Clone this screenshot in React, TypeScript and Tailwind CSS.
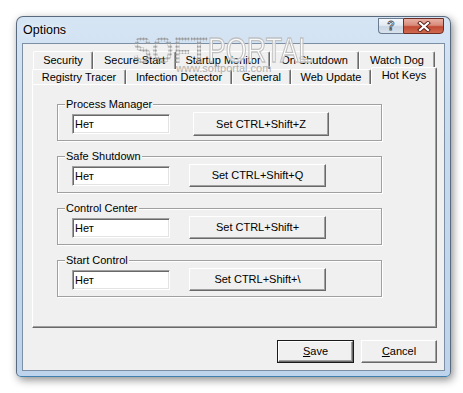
import React from "react";

const row1: [string, number][] = [
  ["Security", 60],
  ["Secure Start", 83],
  ["Startup Monitor", 94],
  ["On Shutdown", 89],
  ["Watch Dog", 76],
];

const row2: [string, number, boolean][] = [
  ["Registry Tracer", 94, false],
  ["Infection Detector", 106, false],
  ["General", 59, false],
  ["Web Update", 80, false],
  ["Hot Keys", 66, true],
];

const groups = [
  { label: "Process Manager", btn: "Set CTRL+Shift+Z", first: true },
  { label: "Safe Shutdown", btn: "Set CTRL+Shift+Q", first: false },
  { label: "Control Center", btn: "Set CTRL+Shift+", first: false },
  { label: "Start Control", btn: "Set CTRL+Shift+\\", first: false },
];

function Tab({ label, width, selected }: { label: string; width: number; selected?: boolean }) {
  return (
    <div
      style={{ width }}
      className={
        selected
          ? "relative z-10 -mt-[2px] h-[18px] shrink-0 flex items-center justify-center rounded-t-[2px] border-l border-t border-r border-l-white border-t-white border-r-[#696969] bg-[#f0f0f0] shadow-[inset_-1px_0_0_#a0a0a0] pb-[2px]"
          : "h-full shrink-0 flex items-center justify-center rounded-t-[2px] border-l border-t border-r border-l-white border-t-white border-r-[#696969] bg-[#f0f0f0] shadow-[inset_-1px_0_0_#a0a0a0]"
      }
    >
      <span className="text-[11px] leading-[13px] text-black whitespace-nowrap">{label}</span>
    </div>
  );
}

function Group({ label, btn, first }: { label: string; btn: string; first: boolean }) {
  return (
    <div className="relative w-[325px] h-[37px] shrink-0 flex items-start pl-[14px] border border-[#a0a0a0] shadow-[inset_1px_1px_0_#fff,1px_1px_0_#fff]">
      <span className="absolute left-[7px] -top-[7px] px-[1px] bg-[#f0f0f0] text-[11px] leading-[13px] text-black whitespace-nowrap">
        {label}
      </span>
      <div className="mt-[9px] w-[98px] h-[20px] shrink-0 flex items-center pl-[1px] bg-white border border-t-[#a0a0a0] border-l-[#a0a0a0] border-r-white border-b-white shadow-[inset_1px_1px_0_#696969,inset_-1px_-1px_0_#e3e3e3]">
        <span className="pl-[1px] text-[11px] leading-[13px] text-black">Нет</span>
      </div>
      <div
        className={
          first
            ? "ml-[23px] mt-[7px] w-[136px] h-[24px] shrink-0 flex items-center justify-center bg-[#f0f0f0] border border-t-white border-l-white border-r-[#696969] border-b-[#696969] shadow-[inset_-1px_-1px_0_#a0a0a0]"
            : "ml-[19px] mt-[7px] w-[137px] h-[23px] shrink-0 flex items-center justify-center bg-[#f0f0f0] border border-t-white border-l-white border-r-[#696969] border-b-[#696969] shadow-[inset_-1px_-1px_0_#a0a0a0]"
        }
      >
        <span className="text-[11px] leading-[13px] text-black whitespace-nowrap">{btn}</span>
      </div>
    </div>
  );
}

export default function App() {
  return (
    <div className="relative w-[463px] h-[393px] overflow-hidden bg-white pt-[16px] pl-[16px] font-['Liberation_Sans',Arial,sans-serif]">
      <div className="w-[435px] h-[361px] flex flex-col rounded-t-[7px] rounded-b-[5px] border border-[#5a6a7e] border-b-[#3f7fae] bg-[linear-gradient(180deg,#d6e5f4_0%,#c6dbef_35%,#bdd4ec_100%)] shadow-[2px_3px_9px_rgba(0,0,0,0.45)]">
        {/* title bar */}
        <div className="h-[26px] shrink-0 flex items-start justify-between pl-[6px] pr-[6px]">
          <span className="mt-[5px] text-[12.5px] leading-[16px] text-black [text-shadow:0_0_6px_#fff]">Options</span>
          <div className="flex mt-[1px]">
            <div className="w-[25px] h-[16px] flex items-center justify-center rounded-bl-[4px] border border-[#6b7c90] border-r-0 bg-[linear-gradient(180deg,#f4f7fb_0%,#e3eaf2_45%,#c9d5e2_55%,#d9e3ee_100%)]">
              <span className="text-[12px] leading-[12px] font-bold text-white [-webkit-text-stroke:0.8px_#4a4a4a]">?</span>
            </div>
            <div className="w-[41px] h-[16px] flex items-center justify-center rounded-br-[4px] border border-[#6e2d24] bg-[linear-gradient(180deg,#e9b0a3_0%,#d88a79_45%,#c24a33_55%,#d06a50_100%)]">
              <svg width="14" height="11" viewBox="0 0 14 11">
                <path d="M3 2 L11 9 M11 2 L3 9" stroke="#5a1f18" strokeWidth="4" strokeLinecap="square" />
                <path d="M3 2 L11 9 M11 2 L3 9" stroke="#ffffff" strokeWidth="2.2" strokeLinecap="square" />
              </svg>
            </div>
          </div>
        </div>

        {/* client area */}
        <div className="mx-[5px] h-[328px] shrink-0 flex flex-col border border-[#7d8fa5] bg-[#f0f0f0]">
          <div className="ml-[9px] mt-[7px] w-[405px] flex flex-col">
            <div className="flex h-[18px] pl-[1px]">
              {row1.map(([l, w]) => (
                <Tab key={l} label={l} width={w} />
              ))}
            </div>
            <div className="flex items-start h-[15px]">
              {row2.map(([l, w, s]) => (
                <Tab key={l} label={l} width={w} selected={s} />
              ))}
            </div>
            <div className="h-[244px] flex flex-col gap-[15px] pl-[24px] pt-[19px] bg-[#f0f0f0] border border-t-white border-l-white border-r-[#696969] border-b-[#696969] shadow-[inset_-1px_-1px_0_#a0a0a0]">
              {groups.map((g) => (
                <Group key={g.label} {...g} />
              ))}
            </div>
          </div>

          <div className="ml-[9px] mt-[12px] w-[405px] flex justify-end gap-[7px]">
            <div className="w-[77px] h-[23px] border border-[#1a1a1a]">
              <div className="w-full h-full flex items-center justify-center bg-[#f0f0f0] border border-t-white border-l-white border-r-[#696969] border-b-[#696969] shadow-[inset_-1px_-1px_0_#a0a0a0]">
                <span className="text-[11px] leading-[13px] text-black">
                  <span className="underline">S</span>ave
                </span>
              </div>
            </div>
            <div className="w-[76px] h-[23px] flex items-center justify-center bg-[#f0f0f0] border border-t-white border-l-white border-r-[#696969] border-b-[#696969] shadow-[inset_-1px_-1px_0_#a0a0a0]">
              <span className="text-[11px] leading-[13px] text-black">
                <span className="underline">C</span>ancel
              </span>
            </div>
          </div>
        </div>
      </div>

      {/* watermark overlay */}
      <div className="absolute left-[133px] top-[33px] flex items-start pointer-events-none">
        <span className="text-[28px] leading-[27px] font-bold origin-top scale-y-[1.3] text-transparent bg-clip-text bg-[radial-gradient(circle,#9a9a9a_1px,transparent_1.2px)] bg-[length:3px_3px] tracking-[0px]">
          SOFT
        </span>
        <span className="text-[27px] leading-[27px] origin-top scale-y-[1.3] text-white/80 [-webkit-text-stroke:1px_#c0c0c0]">
          PORTAL
        </span>
      </div>
      <span className="absolute left-[176px] top-[63px] text-[11px] leading-[11px] text-[#b0b0b0] pointer-events-none">
        www.softportal.com
      </span>
    </div>
  );
}
